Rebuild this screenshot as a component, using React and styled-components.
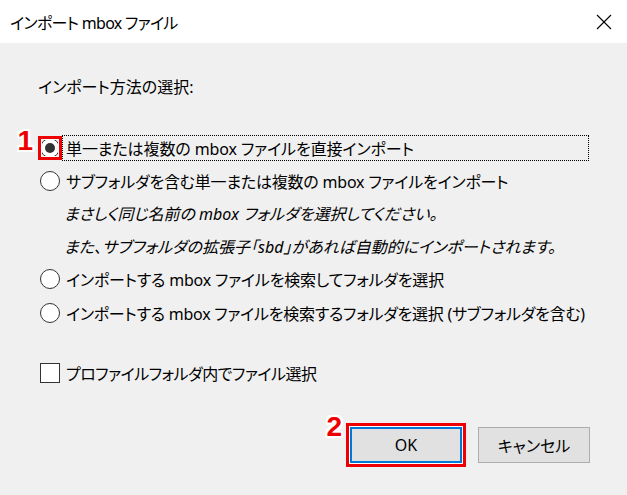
import styled, { createGlobalStyle } from 'styled-components';

const GlobalStyle = createGlobalStyle`
  html, body {
    margin: 0;
    padding: 0;
    background: #f0f0f0;
  }
  body {
    font-family: "Noto Sans", "Noto Sans CJK JP", sans-serif;
    font-feature-settings: "palt";
    color: #000;
  }
`;

const Window = styled.div`
  width: 627px;
  height: 495px;
  display: flex;
  flex-direction: column;
  background: #f0f0f0;
  overflow: hidden;
`;

const TitleBar = styled.div`
  height: 43px;
  flex: none;
  background: #fff;
  display: flex;
  align-items: center;
  justify-content: space-between;
  padding: 0 15px 0 10px;
`;

const Title = styled.span`
  font-size: 16px;
  letter-spacing: -0.7px;
`;

const CloseIcon = styled.svg`
  width: 16px;
  height: 16px;
  display: block;
`;

const Body = styled.div`
  padding: 32px 37px 0 38px;
  display: flex;
  flex-direction: column;
`;

const Heading = styled.div`
  font-size: 16px;
  line-height: 24px;
  margin-bottom: 31px;
`;

const Row = styled.div`
  display: flex;
  align-items: center;
  height: ${p => p.$h}px;
  margin-top: ${p => p.$gapTop || 0}px;
  padding-left: 2px;
`;

const Note = styled.div`
  height: ${p => p.$h}px;
  display: flex;
  align-items: center;
  padding-left: 26px;
  font-size: 16px;
  font-style: italic;
`;

const Marked = styled.div`
  position: relative;
  display: flex;
  &::after {
    content: '';
    position: absolute;
    inset: ${p => p.$inset}px;
    border: 3px solid #ee0000;
    box-shadow: inset 0 0 0 1px #fff;
    pointer-events: none;
  }
`;

const Badge = styled.span`
  position: absolute;
  right: calc(100% + ${p => p.$gap}px);
  top: ${p => p.$top}px;
  font-family: "Liberation Sans", Arial, sans-serif;
  font-weight: 700;
  font-size: 28px;
  line-height: 1;
  color: #ee0000;
  text-shadow: -2px 0 #fff, 2px 0 #fff, 0 -2px #fff, 0 2px #fff,
    -2px -2px #fff, 2px 2px #fff, -2px 2px #fff, 2px -2px #fff;
`;

const Radio = styled.span`
  width: 20px;
  height: 20px;
  box-sizing: border-box;
  border-radius: 50%;
  border: 1px solid #333;
  background: #fff;
  display: flex;
  align-items: center;
  justify-content: center;
  flex: none;
  &::before {
    content: '';
    width: 10px;
    height: 10px;
    border-radius: 50%;
    background: ${p => (p.$checked ? '#333' : 'transparent')};
  }
`;

const Check = styled.span`
  width: 20px;
  height: 20px;
  box-sizing: border-box;
  border: 1px solid #333;
  background: #fff;
  flex: none;
`;

const Label = styled.span`
  margin-left: 2px;
  height: 26px;
  box-sizing: border-box;
  display: flex;
  align-items: center;
  padding-left: 3px;
  font-size: 16px;
  letter-spacing: ${p => p.$ls ?? -0.2}px;
  white-space: nowrap;
  border: 1px ${p => (p.$focus ? 'dotted #000' : 'solid transparent')};
  width: ${p => (p.$focus ? '527px' : 'auto')};
`;

const Footer = styled.div`
  display: flex;
  justify-content: flex-end;
  gap: 16px;
  margin-top: 37px;
`;

const Button = styled.button`
  width: 112px;
  height: 36px;
  box-sizing: border-box;
  background: #e1e1e1;
  border: ${p => (p.$primary ? '2px solid #0078d7' : '1px solid #adadad')};
  font-family: inherit;
  font-feature-settings: "palt";
  font-size: 16px;
  color: #000;
  padding: 0;
  margin: 0;
`;

export default function App() {
  return (
    <Window>
      <GlobalStyle />
      <TitleBar>
        <Title>インポート mbox ファイル</Title>
        <CloseIcon viewBox="0 0 16 16">
          <path d="M1 1 L15 15 M15 1 L1 15" stroke="#000" strokeWidth="1.1" fill="none" />
        </CloseIcon>
      </TitleBar>
      <Body>
        <Heading>インポート方法の選択:</Heading>
        <Row $h={36}>
          <Marked $inset={-2}>
            <Badge $gap={7} $top={-11}>1</Badge>
            <Radio $checked />
          </Marked>
          <Label $focus $ls={-0.1}>単一または複数の mbox ファイルを直接インポート</Label>
        </Row>
        <Row $h={30}>
          <Radio />
          <Label>サブフォルダを含む単一または複数の mbox ファイルをインポート</Label>
        </Row>
        <Note $h={33}>まさしく同じ名前の mbox フォルダを選択してください。</Note>
        <Note $h={33}>また、サブフォルダの拡張子「sbd」があれば自動的にインポートされます。</Note>
        <Row $h={34}>
          <Radio />
          <Label>インポートする mbox ファイルを検索してフォルダを選択</Label>
        </Row>
        <Row $h={33}>
          <Radio />
          <Label $ls={-0.25}>インポートする mbox ファイルを検索するフォルダを選択 (サブフォルダを含む)</Label>
        </Row>
        <Row $h={34} $gapTop={27}>
          <Check />
          <Label $ls={-0.5}>プロファイルフォルダ内でファイル選択</Label>
        </Row>
        <Footer>
          <Marked $inset={-4}>
            <Badge $gap={8} $top={-14}>2</Badge>
            <Button $primary>OK</Button>
          </Marked>
          <Button>キャンセル</Button>
        </Footer>
      </Body>
    </Window>
  );
}
